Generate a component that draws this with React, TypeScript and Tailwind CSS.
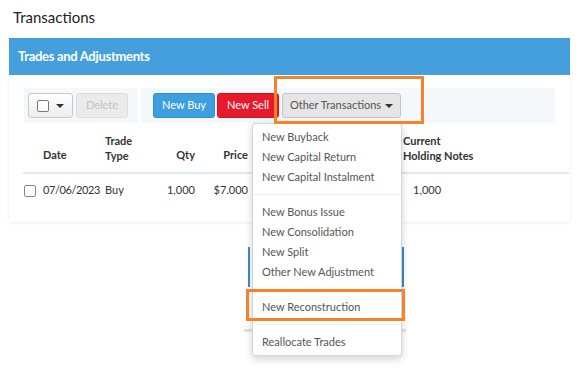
import { ChevronDown } from "lucide-react";

const menuGroups = [
  ["New Buyback", "New Capital Return", "New Capital Instalment"],
  ["New Bonus Issue", "New Consolidation", "New Split", "Other New Adjustment"],
  ["New Reconstruction"],
  ["Reallocate Trades"],
];

const Caret = () => (
  <span className="inline-block w-0 h-0 border-x-[4px] border-x-transparent border-t-[4px] border-t-[#333]" />
);

const App = () => {
  return (
    <div
      className="relative w-[582px] h-[369px] bg-white overflow-hidden text-[#333]"
      style={{ fontFamily: "Lato, 'Open Sans', sans-serif" }}
    >
      <h1 className="pl-[13px] pt-[6px] h-[38px] text-[15px] leading-[22px] text-[#222]">
        Transactions
      </h1>

      <div className="mx-[9px] w-[561px] shadow-[0_1px_3px_rgba(0,0,0,0.08)]">
        <div className="h-[37px] bg-[#459fdc] flex items-center pl-[9px]">
          <h2 className="text-white font-bold text-[13px] tracking-[-0.3px]">Trades and Adjustments</h2>
        </div>

        <div className="bg-white pt-[13px] pb-[15px]">
          {/* toolbar */}
          <div className="mx-[15px] h-[35px] flex">
            <div className="w-[114px] bg-[#f5f8fb] flex items-center gap-[3px] pl-[4px]">
              <button className="h-[25px] w-[45px] flex items-center justify-center gap-[7px] rounded-[3px] border border-[#c9c9c9] bg-gradient-to-b from-white to-[#ececec]">
                <span className="w-[12px] h-[12px] rounded-[2px] border border-[#777] bg-white" />
                <Caret />
              </button>
              <button className="h-[25px] w-[52px] rounded-[3px] border border-[#dcdcdc] bg-[#ebebeb] text-[11px] text-[#c4c4c4]">
                Delete
              </button>
            </div>
            <div className="w-[3px]" />
            <div className="flex-1 bg-[#f5f8fb] flex items-center pl-[12px] gap-[2px]">
              <button className="h-[25px] w-[62px] rounded-[3px] bg-[#3d9fe0] border border-[#3590cf] text-white text-[11px]">
                New Buy
              </button>
              <button className="h-[25px] w-[62px] rounded-[3px] bg-[#e8192b] border border-[#cf1424] text-white text-[11px]">
                New Sell
              </button>
              <button className="ml-[1px] h-[25px] w-[119px] rounded-[3px] bg-[#e5e5e5] border border-[#c4c4c4] text-[#555] text-[11px] flex items-center justify-center gap-[4px]">
                Other Transactions
                <Caret />
              </button>
            </div>
          </div>

          {/* table */}
          <table className="ml-[14px] mt-[7px] w-[546px] text-[11px] border-collapse">
            <thead>
              <tr className="border-b-2 border-[#dde9f5] h-[43px] align-bottom">
                <th className="w-[20px]" />
                <th className="w-[62px] text-left font-bold pb-[9px]">Date</th>
                <th className="w-[45px] text-left font-bold leading-[15px] pb-[9px]">
                  Trade
                  <br />
                  Type
                </th>
                <th className="w-[45px] text-right font-bold pb-[9px]">Qty</th>
                <th className="w-[55px] text-right font-bold pb-[9px] pr-[2px]">Price</th>
                <th className="w-[153px]" />
                <th className="text-left font-bold leading-[15px] pb-[9px]">
                  Current
                  <br />
                  Holding Notes
                </th>
              </tr>
            </thead>
            <tbody>
              <tr className="h-[34px]">
                <td>
                  <span className="block ml-[1px] w-[12px] h-[12px] rounded-[2px] border border-[#888] bg-white" />
                </td>
                <td className="tracking-[-0.4px]">07/06/2023</td>
                <td>Buy</td>
                <td className="text-right">1,000</td>
                <td className="text-right pr-[2px]">$7.000</td>
                <td />
                <td className="pl-[10px]">1,000</td>
              </tr>
            </tbody>
          </table>
        </div>
      </div>

      {/* partly hidden element beneath the menu */}
      <div className="absolute left-[244px] top-[224px] w-[162px] h-[108px] border-b-[3px] border-[#e3e3e3]">
        <div className="mt-[23px] ml-[4px] w-[156px] h-[40px] border-x-2 border-[#3a8ccc]" />
      </div>

      {/* dropdown menu */}
      <div className="absolute left-[252px] top-[123px] w-[150px] bg-white border border-[#d6d6d6] rounded-[3px] shadow-[0_3px_8px_rgba(0,0,0,0.18)] pt-[3px] pb-[3px] text-[11px] text-[#555]">
        {menuGroups.map((group, gi) => (
          <div key={gi}>
            {gi > 0 && <div className="my-[7px] h-px bg-[#eef1f4]" />}
            {group.map((item) => (
              <div key={item} className="h-[20px] leading-[20px] pl-[9px]">
                {item}
              </div>
            ))}
          </div>
        ))}
      </div>

      {/* highlight boxes */}
      <div className="absolute left-[274px] top-[76px] w-[150px] h-[48px] border-[3px] border-[#f7822a]" />
      <div className="absolute left-[246px] top-[289px] w-[159px] h-[32px] border-[3px] border-[#f7822a]" />
    </div>
  );
};

export default App;
